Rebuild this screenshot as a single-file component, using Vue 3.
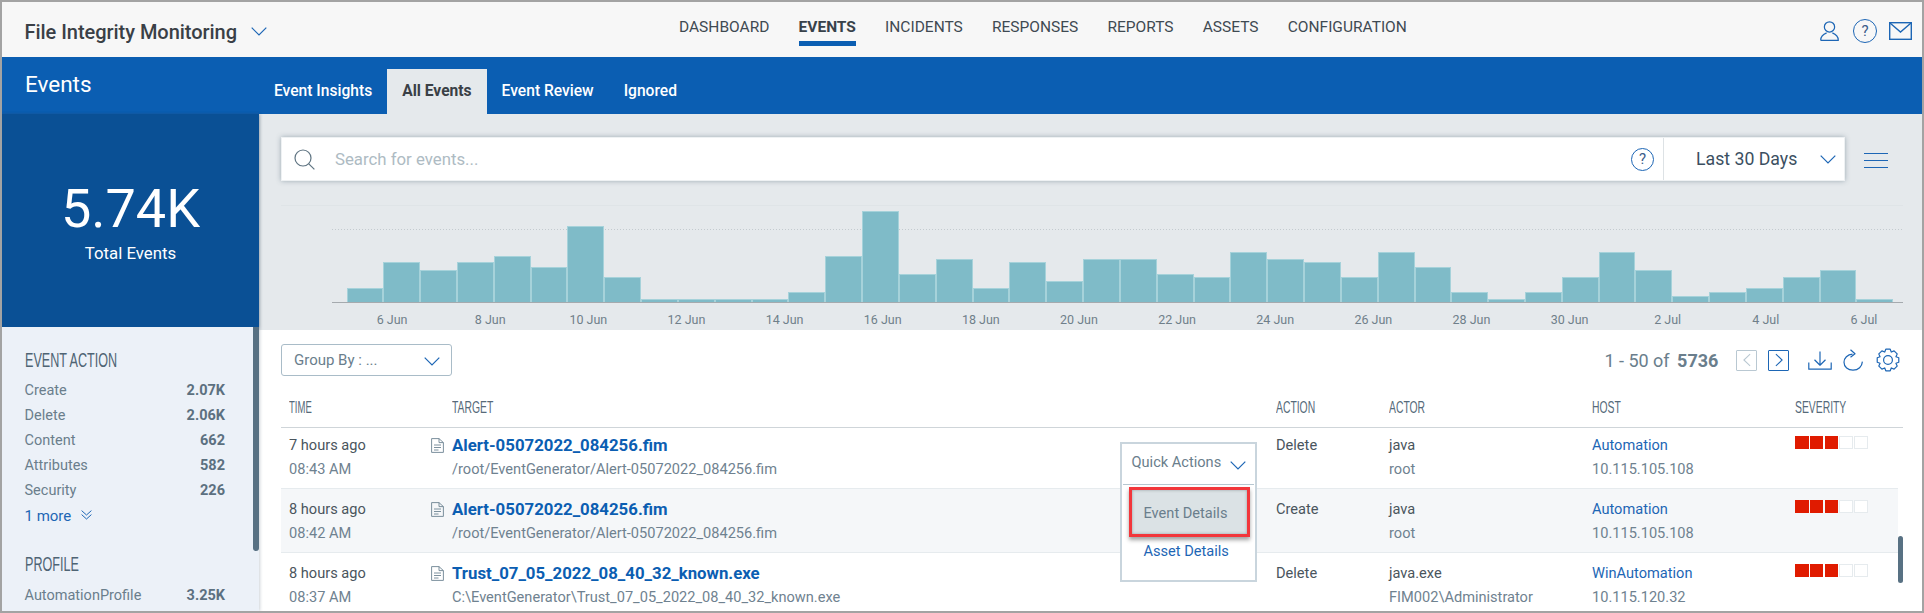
<script setup>
const navItems = ['DASHBOARD', 'EVENTS', 'INCIDENTS', 'RESPONSES', 'REPORTS', 'ASSETS', 'CONFIGURATION']
const tabs = ['Event Insights', 'All Events', 'Event Review', 'Ignored']
const barTops = [288, 262, 270, 262, 256, 267, 226, 277, 299, 299, 299, 299, 292, 256, 211, 274, 259, 288, 262, 281, 259, 259, 274, 277, 252, 259, 262, 277, 252, 267, 292, 299, 292, 277, 252, 270, 296, 292, 288, 277, 270, 299]
const bars = barTops.map((t) => 302 - t)
const labels = ['6 Jun', '8 Jun', '10 Jun', '12 Jun', '14 Jun', '16 Jun', '18 Jun', '20 Jun', '22 Jun', '24 Jun', '26 Jun', '28 Jun', '30 Jun', '2 Jul', '4 Jul', '6 Jul']
const actions = [['Create', '2.07K'], ['Delete', '2.06K'], ['Content', '662'], ['Attributes', '582'], ['Security', '226']]
const events = [
  { ago: '7 hours ago', time: '08:43 AM', name: 'Alert-05072022_084256.fim', path: '/root/EventGenerator/Alert-05072022_084256.fim', action: 'Delete', actor: 'java', user: 'root', host: 'Automation', ip: '10.115.105.108' },
  { ago: '8 hours ago', time: '08:42 AM', name: 'Alert-05072022_084256.fim', path: '/root/EventGenerator/Alert-05072022_084256.fim', action: 'Create', actor: 'java', user: 'root', host: 'Automation', ip: '10.115.105.108' },
  { ago: '8 hours ago', time: '08:37 AM', name: 'Trust_07_05_2022_08_40_32_known.exe', path: 'C:\\EventGenerator\\Trust_07_05_2022_08_40_32_known.exe', action: 'Delete', actor: 'java.exe', user: 'FIM002\\Administrator', host: 'WinAutomation', ip: '10.115.120.32' }
]
const gearPath = (() => {
  const pts = []
  const n = 8
  for (let i = 0; i < n; i++) {
    const a = (i * Math.PI * 2) / n
    const w = 0.2
    const rs = [[8.6, -0.39], [11, -w], [11, w], [8.6, 0.39]]
    for (const [r, d] of rs) {
      pts.push(`${(12 + r * Math.cos(a + d)).toFixed(2)} ${(12 + r * Math.sin(a + d)).toFixed(2)}`)
    }
  }
  return 'M' + pts.join('L') + 'Z'
})()
</script>

<template>
  <div class="app">
    <header class="topbar">
      <div class="brand">
        <span class="brand-name">File Integrity Monitoring</span>
        <svg class="chev" viewBox="0 0 16 9"><polyline points="0.7,0.7 8,8 15.3,0.7" /></svg>
      </div>
      <nav class="nav">
        <a v-for="item in navItems" :key="item" class="nav-item" :class="{ on: item === 'EVENTS' }">{{ item }}</a>
      </nav>
      <div class="top-icons">
        <svg class="ic-user" viewBox="0 0 20 21"><circle cx="10" cy="6.2" r="5.4" /><path d="M0.8 20.4C0.6 15.6 4 13.6 7 12.4M13 12.4C16 13.6 19.4 15.6 19.2 20.4H0.8" /></svg>
        <span class="help big">?</span>
        <svg class="ic-mail" viewBox="0 0 23 18"><rect x="0.7" y="0.7" width="21.6" height="16.6" /><polyline points="1,1 11.5,10 22,1" /></svg>
      </div>
    </header>

    <div class="bluebar">
      <div class="page-title">Events</div>
      <div class="tabs">
        <a v-for="tab in tabs" :key="tab" class="tab" :class="{ on: tab === 'All Events' }">{{ tab }}</a>
      </div>
    </div>

    <div class="body">
      <aside class="left">
        <div class="stat">
          <div class="stat-num">5.74K</div>
          <div class="stat-label">Total Events</div>
        </div>
        <div class="facets">
          <h3 class="facet-title"><span>EVENT ACTION</span></h3>
          <div v-for="a in actions" :key="a[0]" class="facet-row"><span>{{ a[0] }}</span><b>{{ a[1] }}</b></div>
          <div class="more">
            1 more
            <svg viewBox="0 0 11 10"><polyline points="0.6,0.6 5.5,5 10.4,0.6" /><polyline points="0.6,4.6 5.5,9 10.4,4.6" /></svg>
          </div>
          <h3 class="facet-title second"><span>PROFILE</span></h3>
          <div class="facet-row"><span>AutomationProfile</span><b>3.25K</b></div>
          <i class="facet-scroll"></i>
        </div>
      </aside>

      <main class="content">
        <section class="chart">
          <div class="search-row">
            <div class="search">
              <svg class="ic-search" viewBox="0 0 21 21"><circle cx="9" cy="9" r="8" /><line x1="14.8" y1="14.8" x2="20.4" y2="20.4" /></svg>
              <span class="placeholder">Search for events...</span>
              <span class="help mid">?</span>
              <div class="range">
                <span>Last 30 Days</span>
                <svg class="chev" viewBox="0 0 16 9"><polyline points="0.7,0.7 8,8 15.3,0.7" /></svg>
              </div>
            </div>
            <div class="burger"><i></i><i></i><i></i></div>
          </div>
          <div class="plot">
            <i class="dotted"></i>
            <div class="bars">
              <div v-for="(h, i) in bars" :key="i" class="bar" :style="{ height: h + 'px' }"></div>
            </div>
          </div>
          <div class="axis">
            <span v-for="l in labels" :key="l">{{ l }}</span>
          </div>
        </section>

        <section class="list">
          <div class="toolbar">
            <div class="groupby">
              <span>Group By : ...</span>
              <svg class="chev" viewBox="0 0 16 9"><polyline points="0.7,0.7 8,8 15.3,0.7" /></svg>
            </div>
            <div class="pager">
              <span class="count">1 - 50 of <b>5736</b></span>
              <span class="page-btn off"><svg viewBox="0 0 9 15"><polyline points="8,0.8 1,7.5 8,14.2" /></svg></span>
              <span class="page-btn"><svg viewBox="0 0 9 15"><polyline points="1,0.8 8,7.5 1,14.2" /></svg></span>
              <svg class="ic-down" viewBox="0 0 24 19"><path d="M0.8 11.5V18.2H23.2V11.5M12 0.5V14M6.5 8.8L12 14.2L17.5 8.8" /></svg>
              <svg class="ic-refresh" viewBox="0 0 21 22"><path d="M9.5 5.2C4.5 5.4 1 9 1 13.2C1 18 5 21.2 10 21.2C15.5 21.2 19 17.5 19.4 12.6M7.5 0.8L12 4.8L7.5 8.2" /></svg>
              <svg class="ic-gear" viewBox="0 0 24 24"><path :d="gearPath" /><circle cx="12" cy="12" r="4.4" /></svg>
            </div>
          </div>

          <div class="thead">
            <span class="th first"><span class="tight">TIME</span></span>
            <span class="th target-head"><span>TARGET</span></span>
            <span class="th"><span>ACTION</span></span>
            <span class="th"><span>ACTOR</span></span>
            <span class="th"><span>HOST</span></span>
            <span class="th"><span>SEVERITY</span></span>
          </div>

          <div v-for="(e, i) in events" :key="i" class="row" :class="{ alt: i === 1, top: i === 0 }">
            <div class="cell first"><div class="l1">{{ e.ago }}</div><div class="l2">{{ e.time }}</div></div>
            <div class="cell doc">
              <svg viewBox="0 0 13 15"><path d="M0.6 0.6H8L12.4 4.6V14.4H0.6ZM8 0.6V4.6H12.4M3 7H10M3 9.5H10M3 12H7.5" /></svg>
            </div>
            <div class="cell"><div class="name">{{ e.name }}</div><div class="l2">{{ e.path }}</div></div>
            <div class="cell"><div class="l1">{{ e.action }}</div></div>
            <div class="cell"><div class="l1">{{ e.actor }}</div><div class="l2">{{ e.user }}</div></div>
            <div class="cell"><div class="l1 link">{{ e.host }}</div><div class="l2">{{ e.ip }}</div></div>
            <div class="cell sev">
              <i v-for="n in 5" :key="n" :class="{ fill: n <= 3 }"></i>
            </div>
          </div>

          <div class="quick">
            <div class="quick-head">
              <span>Quick Actions</span>
              <svg class="chev" viewBox="0 0 16 9"><polyline points="0.7,0.7 8,8 15.3,0.7" /></svg>
            </div>
            <div class="quick-hi"><span>Event Details</span></div>
            <div class="quick-link">Asset Details</div>
          </div>
          <i class="list-scroll"></i>
        </section>
      </main>
    </div>
  </div>
</template>

<style>
html, body { margin: 0; background: #fff; }
</style>

<style scoped>
.app {
  box-sizing: border-box;
  width: 1924px;
  height: 613px;
  border: 2px solid #a3a3a3;
  overflow: hidden;
  font-family: Roboto, "Liberation Sans", sans-serif;
  display: flex;
  flex-direction: column;
  background: #fff;
}
svg { fill: none; display: block; flex: none; }
.chev { width: 16px; height: 9px; }
.chev polyline { stroke: #1d66b5; stroke-width: 1.2; fill: none; }

.topbar { height: 55px; flex: none; background: #f7f7f7; display: flex; align-items: flex-start; }
.brand { width: 677px; flex: none; display: flex; align-items: center; height: 60px; padding-left: 22.5px; box-sizing: border-box; }
.brand-name { font-size: 20px; font-weight: 500; color: #3a4046; line-height: 60px; letter-spacing: -.04px; }
.brand .chev { margin-left: 14px; margin-top: -1px; }
.nav { display: flex; gap: 29.2px; }
.nav-item { margin-top: 15px; line-height: 20px; font-size: 15.5px; color: #3f4a52; padding-bottom: 4px; border-bottom: 5px solid transparent; }
.nav-item.on { font-weight: 700; border-bottom-color: #0b5eb2; color: #38424a; }
.top-icons { margin-left: auto; display: flex; align-items: center; padding-right: 10px; padding-top: 14px; box-sizing: border-box; height: 44px; gap: 13px; }
.ic-user { width: 19px; height: 20px; }
.ic-user circle, .ic-user path { stroke: #1d66b5; stroke-width: 1.3; }
.ic-mail { width: 23px; height: 18px; }
.ic-mail rect, .ic-mail polyline { stroke: #1d66b5; stroke-width: 1.4; }
.help { box-sizing: border-box; border: 1.4px solid #1d66b5; border-radius: 50%; display: flex; align-items: center; justify-content: center; color: #3b5c8a; font-family: Roboto, sans-serif; }
.help.big { width: 24px; height: 24px; font-size: 15px; margin: 0 -1px 0 1px; }
.help.mid { width: 23px; height: 23px; font-size: 15px; }

.bluebar { height: 57px; flex: none; background: #0b5eb2; display: flex; align-items: flex-end; position: relative; }
.page-title { width: 257px; flex: none; height: 57px; line-height: 55px; padding-left: 23px; box-sizing: border-box; font-size: 22.5px; color: #fff; align-self: flex-start; }
.tabs { display: flex; }
.tab { height: 45px; line-height: 44px; padding: 0 15px; font-size: 15.6px; font-weight: 500; color: #fff; }
.tab.on { background: #e5e9ec; color: #3a4046; font-weight: 700; }

.body { flex: 1; display: flex; min-height: 0; }
.left { width: 257px; flex: none; display: flex; flex-direction: column; position: relative; z-index: 2; box-shadow: 1px 0 3px rgba(60, 80, 100, .25); }
.stat { height: 213px; flex: none; background: #0a5095; color: #fff; text-align: center; box-sizing: border-box; padding-top: 61px; box-shadow: 0 1px 3px rgba(40, 60, 90, .35); position: relative; }
.stat-num { font-size: 54px; font-weight: 400; line-height: 68px; }
.stat-label { font-size: 16.8px; line-height: 22px; margin-top: -1px; }
.facets { flex: 1; background: #ecf1f8; padding: 21px 34px 0 22.5px; position: relative; overflow: hidden; }
.facet-title { margin: 0 0 5.5px; line-height: 24px; height: 24px; font-size: 20px; font-weight: 400; color: #4f6474; font-family: "Liberation Sans", sans-serif; }
.facet-title span { display: inline-block; transform: scaleX(.63); transform-origin: left center; white-space: nowrap; }
.facet-title.second { margin: 24px 0 7px; }
.facet-row { display: flex; justify-content: space-between; height: 25px; line-height: 25px; font-size: 14.5px; color: #6a7e8c; }
.facet-row b { font-weight: 700; color: #5c7080; }
.more { height: 25px; box-sizing: border-box; padding-top: 2px; font-size: 15px; color: #1d66b5; display: flex; align-items: center; gap: 10px; }
.more svg { width: 11px; height: 10px; margin-top: -2px; }
.more polyline { stroke: #1d66b5; stroke-width: 1; }
.facet-scroll { position: absolute; right: 0; top: 0; width: 6px; height: 224px; background: #587183; border-radius: 0 0 3px 3px; }

.content { flex: 1; min-width: 0; display: flex; flex-direction: column; }
.chart { height: 216px; flex: none; background: #e5e9ec; box-sizing: border-box; padding: 23px 18.6px 0 22px; }
.search-row { display: flex; align-items: center; height: 44px; }
.search { width: 1564px; height: 44px; flex: none; background: #fff; display: flex; align-items: center; box-shadow: 0 0 5px rgba(70, 95, 110, .45); border: 1px solid #eef1f3; box-sizing: border-box; }
.ic-search { width: 21px; height: 21px; margin-left: 12px; }
.ic-search circle, .ic-search line { stroke: #5f7482; stroke-width: 1.2; }
.placeholder { margin-left: 20px; font-size: 16.8px; color: #aebbc3; flex: 1; }
.search .help { margin-right: 9px; }
.range { width: 181px; height: 100%; flex: none; border-left: 1px solid #dde2e5; display: flex; align-items: center; box-sizing: border-box; padding-left: 32px; font-size: 17.7px; color: #3b4f61; }
.range .chev { margin-left: 23px; }
.burger { margin-left: 19px; width: 24px; display: flex; flex-direction: column; gap: 6.2px; margin-top: 3px; }
.burger i { display: block; height: 1.2px; background: #1d66b5; }
.plot { margin-top: 24px; height: 97px; border-top: 1px solid #dfe4e7; position: relative; }
.dotted { position: absolute; left: 51px; right: 0; top: 23px; height: 1px; background: repeating-linear-gradient(90deg, #c3cacf 0 1px, transparent 1px 3px); }
.bars { position: absolute; left: 51px; right: 0; bottom: 0; height: 97px; border-bottom: 1px solid #a5aaae; display: flex; align-items: flex-end; padding-left: 14.5px; box-sizing: content-box; }
.bar { width: 36.83px; flex: none; box-sizing: border-box; background: #7fbbc8; border: 1px solid #a6d2da; border-bottom: 0; }
.axis { display: flex; padding-left: 62px; height: 32px; align-items: center; }
.axis span { width: 98.13px; flex: none; text-align: center; font-size: 12.5px; color: #6f7f8a; }

.list { flex: 1; position: relative; padding: 14px 18.6px 0 22px; overflow: hidden; min-height: 0; }
.toolbar { display: flex; justify-content: space-between; height: 32px; }
.groupby { width: 171px; height: 32px; box-sizing: border-box; border: 1px solid #a9bcc8; border-radius: 3px; display: flex; align-items: center; justify-content: space-between; padding: 0 11px 0 12px; font-size: 15px; color: #6a7e8c; }
.groupby .chev { margin-top: 3px; }
.pager { display: flex; align-items: center; margin-right: 3px; position: relative; }
.count { font-size: 18px; color: #6a7e8c; margin-right: 18px; }
.count b { font-weight: 700; margin-left: 3px; }
.page-btn { width: 21px; height: 21px; box-sizing: border-box; border: 1.3px solid #1d66b5; display: flex; align-items: center; justify-content: center; margin-right: 11px; border-radius: 1px; }
.page-btn svg { width: 8px; height: 14px; }
.page-btn polyline { stroke: #1d66b5; stroke-width: 1.2; }
.page-btn.off { border-color: #b9c8d2; }
.page-btn.off polyline { stroke: #b9c8d2; }
.ic-down { width: 24px; height: 19px; margin: 0 11px 0 8px; }
.ic-down path, .ic-refresh path, .ic-gear path, .ic-gear circle { stroke: #1d66b5; stroke-width: 1.2; stroke-linejoin: round; }
.ic-refresh { width: 21px; height: 22px; margin-right: 12px; }
.ic-gear { width: 24px; height: 24px; }

.thead, .row { display: grid; grid-template-columns: 150px 21px 824px 113px 203px 203px 1fr; }
.thead { height: 40px; margin-top: 12px; align-items: center; border-bottom: 1.5px solid #cfd5d9; box-sizing: border-box; }
.th { font-family: "Liberation Sans", sans-serif; font-size: 17px; color: #566a7a; white-space: nowrap; }
.th span { display: inline-block; transform: scaleX(.61); transform-origin: left center; }
.th span.tight { transform: scaleX(.56); }
.th.first { padding-left: 8px; }
.target-head { grid-column: 2 / span 2; padding-left: 21px; }
.row { height: 64.2px; box-sizing: border-box; padding-top: 7.5px; border-bottom: 1.5px solid #e6ebee; margin-right: 5px; font-size: 14.6px; }
.row.top { height: 61px; padding-top: 4.5px; }
.row.alt { background: #f5f7f9; }
.cell.first { padding-left: 8px; }
.l1 { line-height: 24px; color: #4a555d; }
.l2 { line-height: 24px; color: #6f8290; white-space: nowrap; }
.link { color: #1d66b5; }
.name { line-height: 24px; font-size: 16.8px; font-weight: 700; color: #0b5eb2; white-space: nowrap; }
.doc svg { width: 13px; height: 15px; margin-top: 5px; }
.doc path { stroke: #6d8392; stroke-width: .9; }
.sev { display: flex; gap: 1.3px; padding-top: 3.5px; height: 16px; }
.sev i { width: 13.5px; height: 13px; box-sizing: border-box; border: 1px solid #e6ebee; background: #fff; display: block; }
.sev i.fill { background: #e01b00; border-color: #e01b00; }

.quick { position: absolute; left: 860.5px; top: 111.7px; width: 137.5px; height: 140.6px; box-sizing: border-box; background: #fff; border: 2px solid #c9d5dd; z-index: 3; }
.quick-head { height: 41px; margin: 0 1px; border-bottom: 1px solid #b6c6d0; display: flex; align-items: center; justify-content: space-between; padding: 0 8px 3px 9px; box-sizing: border-box; font-size: 14.6px; color: #6a7e8c; }
.quick-head .chev { margin-top: 7px; }
.quick-hi { margin: 2px 5px 0 7px; height: 50.7px; box-sizing: border-box; border: 3px solid #f2363b; background: #dbe2e5; box-shadow: 0 3px 4px rgba(50, 50, 50, .45), inset 0 0 3px rgba(80, 90, 95, .5); display: flex; align-items: center; padding: 2px 0 0 12px; font-size: 14.6px; color: #6a7e8c; }
.quick-link { margin: 6px 0 0 22px; font-size: 14.6px; line-height: 17px; color: #1d66b5; }
.list-scroll { position: absolute; right: 18.6px; top: 206px; width: 5.6px; height: 47px; background: #587183; border-radius: 3px; }
</style>
